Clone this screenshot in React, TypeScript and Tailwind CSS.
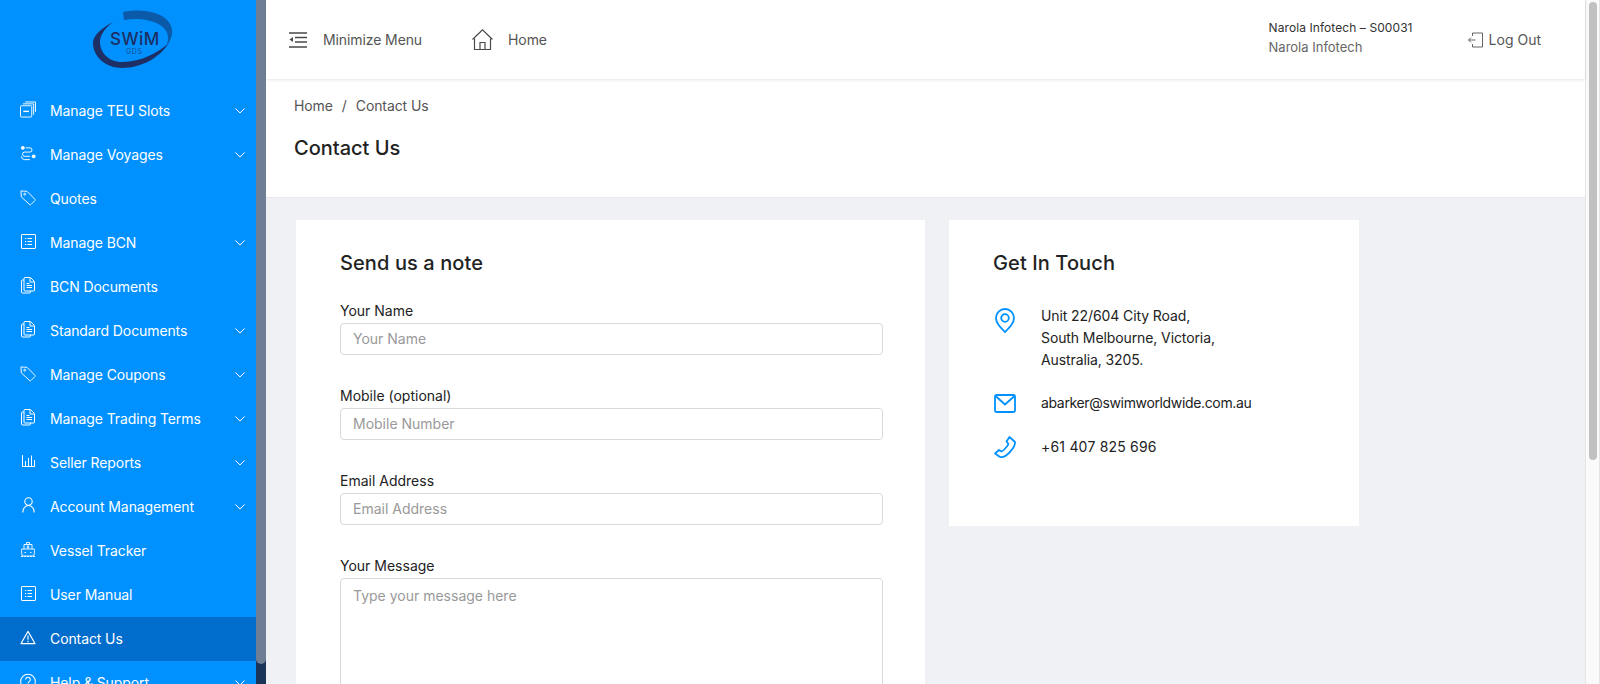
import React from "react";

const W = "#ffffff";

const Copy = () => (
  <svg width="17" height="17" viewBox="0 0 17 17" fill="none" stroke={W} strokeWidth="1">
    <rect x="0.5" y="4.5" width="12" height="12" rx="1" />
    <path d="M3 2.5h11.5V14M5.5 0.5h11V11" />
    <path d="M3.5 10.5h6" strokeWidth="1.5" />
  </svg>
);
const Route = () => (
  <svg width="17" height="17" viewBox="0 0 17 17" fill="none" stroke={W} strokeWidth="1">
    <circle cx="3" cy="2.5" r="2" fill={W} stroke="none" />
    <circle cx="14.5" cy="11.5" r="2" fill={W} stroke="none" />
    <path d="M6 2.500h4.500a2.200 2.200 0 0 1 0 4.500h-6a2.300 2.300 0 0 0 0 4.500h6" />
    <path d="M1.500 11.500a3.500 3.500 0 0 0 3 3.500h6" />
  </svg>
);
const Tag = () => (
  <svg width="17" height="17" viewBox="0 0 17 17" fill="none" stroke={W} strokeWidth="1" strokeLinejoin="round">
    <path d="M1 1.5l6.5 0.5 8.500 8.500a0.800 0.800 0 0 1 0 1.100l-4.500 4.500a0.800 0.800 0 0 1-1.100 0L1.500 8z" />
    <circle cx="5" cy="5" r="1" />
  </svg>
);
const ListBox = () => (
  <svg width="15" height="15" viewBox="0 0 15 15" fill="none" stroke={W} strokeWidth="1">
    <rect x="0.5" y="0.5" width="14" height="14" rx="0.5" />
    <path d="M6.500 4.500h4.500M6.500 7.500h4.500M6.500 10.500h4.500M4 4.500h1.200M4 7.500h1.200M4 10.500h1.200" />
  </svg>
);
const Doc = () => (
  <svg width="14" height="17" viewBox="0 0 14 17" fill="none" stroke={W} strokeWidth="1" strokeLinejoin="round">
    <path d="M3 3H1.500a1 1 0 0 0-1 1v11a1 1 0 0 0 1 1h7a1 1 0 0 0 1-1v-1" />
    <path d="M3 1.500a1 1 0 0 1 1-1h5.500l4 4V13a1 1 0 0 1-1 1H4a1 1 0 0 1-1-1z" />
    <path d="M9 1v4h4M5.500 6.500h3M5.500 8.500h5.500M5.500 10.500h5.500" />
  </svg>
);
const Bars = () => (
  <svg width="13" height="12" viewBox="0 0 13 12" fill="none" stroke={W} strokeWidth="1">
    <path d="M0.500 0v11.500M0 11.500h13M3.500 6v5M6.500 3v8M9.500 0.500v10.500M12.500 5v6" />
  </svg>
);
const User = () => (
  <svg width="13" height="16" viewBox="0 0 13 16" fill="none" stroke={W} strokeWidth="1.1">
    <circle cx="6.500" cy="4.500" r="3.700" />
    <path d="M0.800 15.500c0-4 2.500-7 5.700-7s5.700 3 5.700 7" />
  </svg>
);
const Ship = () => (
  <svg width="14" height="15" viewBox="0 0 14 15" fill="none" stroke={W} strokeWidth="0.9">
    <path d="M5.500 2.500V0.500h3v2M3 7V2.500h8V7M1.200 14c-0.500-3-1-5-0.500-7h12.600c0.500 2 0 4-0.500 7z" />
    <path d="M5.500 5h3M3.500 10.500h1.500M9 10.500h1.500M7 2.500V7" />
    <path d="M0 14.500h14" strokeDasharray="2 1" />
  </svg>
);
const Warn = () => (
  <svg width="17" height="15" viewBox="0 0 17 15" fill="none" stroke={W} strokeWidth="1.1" strokeLinejoin="round">
    <path d="M8.500 1L16 14H1z" />
    <path d="M8.500 5.500v4.500M8.500 11v1.500" strokeWidth="1.2" />
  </svg>
);
const Help = () => (
  <svg width="17" height="17" viewBox="0 0 17 17" fill="none" stroke={W} strokeWidth="1.1">
    <circle cx="8.500" cy="8.500" r="7.800" />
    <path d="M6 6.500a2.500 2.500 0 1 1 3.800 2.100c-0.800 0.500-1.300 1-1.300 2M8.500 12v1.500" />
  </svg>
);
const Chevron = () => (
  <svg width="10" height="6" viewBox="0 0 10 6" fill="none" stroke={W} strokeWidth="1">
    <path d="M0.500 0.500L5 5l4.500-4.500" />
  </svg>
);

const items: [React.ReactNode, string, boolean, boolean?][] = [
  [<Copy />, "Manage TEU Slots", true],
  [<Route />, "Manage Voyages", true],
  [<Tag />, "Quotes", false],
  [<ListBox />, "Manage BCN", true],
  [<Doc />, "BCN Documents", false],
  [<Doc />, "Standard Documents", true],
  [<Tag />, "Manage Coupons", true],
  [<Doc />, "Manage Trading Terms", true],
  [<Bars />, "Seller Reports", true],
  [<User />, "Account Management", true],
  [<Ship />, "Vessel Tracker", false],
  [<ListBox />, "User Manual", false],
  [<Warn />, "Contact Us", false, true],
  [<Help />, "Help & Support", true],
];

function Logo() {
  return (
    <div className="relative w-[84px] h-[60px]">
      <svg width="84" height="60" viewBox="0 0 84 60" className="absolute inset-0">
        <path d="M21 12C10 18 1 25 1 33C1 47 14 58 30 58C50 58 68 47 76 34C66 42 50 52 30 52C16 52 8 42 8 32C8 25 13 18 21 12z" fill="#1d2f64" />
        <path d="M31 2C45 -1 65 0 75 10C83 18 81 28 74 37C78 27 76 20 68 15C58 9 44 8 32 10z" fill="#0b59a9" />
      </svg>
      <span className="absolute left-[18px] top-[18px] text-[17px] leading-[22px] font-medium tracking-[0.5px] text-[#1d2f64]">SWiM</span>
      <span className="absolute left-[34px] top-[37px] text-[7px] leading-[9px] tracking-[0.6px] text-[#1d4f8f]">GDS</span>
    </div>
  );
}

function Sidebar() {
  return (
    <div className="flex w-[266px] shrink-0 h-full">
      <div className="w-[256px] bg-[#0091ff] overflow-hidden">
        <div className="h-[89px] pt-[10px] pl-[92px]">
          <Logo />
        </div>
        {items.map(([icon, label, chev, active], i) => (
          <div key={i} className={`flex items-center h-[44px] pl-[20px] pr-[11px] ${active ? "bg-[#006dcc]" : ""}`}>
            <span className="w-[16px] flex justify-center shrink-0 pb-[4px]">{icon}</span>
            <span className="ml-[14px] flex-1 text-[14px] leading-[20px] tracking-[-0.1px] pb-[1px] text-white whitespace-nowrap">{label}</span>
            {chev && <Chevron />}
          </div>
        ))}
      </div>
      <div className="w-[10px] flex flex-col bg-[#1a3358]">
        <div className="h-[664px] bg-[#6e7f94] rounded-b-[5px]" />
      </div>
    </div>
  );
}

function Header() {
  return (
    <div className="h-[79px] bg-white shadow-[0_1px_3px_rgba(0,0,0,0.1)] relative flex items-center pl-[23px] pr-[44px] text-[14px] text-[#555] tracking-[-0.1px]">
      <svg width="18" height="16" viewBox="0 0 18 16" fill="none" stroke="#4a4a4a" strokeWidth="1.4">
        <path d="M0 1h18M6 5.500h12M6 10h12M0 15h18" />
        <path d="M4 5v5L0.500 7.500z" fill="#4a4a4a" strokeWidth="0" />
      </svg>
      <span className="ml-[16px]">Minimize Menu</span>
      <svg className="ml-[50px]" width="21" height="22" viewBox="0 0 21 22" fill="none" stroke="#4a4a4a" strokeWidth="1.2">
        <path d="M0.500 10.500L10.500 0.800l10 9.700" />
        <path d="M2.500 9.500v11h16v-11M8 20.500v-7h5v7" />
      </svg>
      <span className="ml-[15px]">Home</span>
      <div className="flex-1" />
      <div className="flex flex-col pb-[5px] tracking-normal">
        <span className="text-[12px] leading-[20px] tracking-[0.08px] text-[#333]">Narola Infotech – S00031</span>
        <span className="text-[13px] leading-[19px] text-[#666]">Narola Infotech</span>
      </div>
      <svg className="ml-[55px]" width="15" height="16" viewBox="0 0 15 16" fill="none" stroke="#666" strokeWidth="1">
        <path d="M4.500 4V1h10v14h-10v-3M0.500 8h7M3 5.500L0.500 8 3 10.500" />
      </svg>
      <span className="ml-[6px] tracking-normal">Log Out</span>
    </div>
  );
}

function Field({ label, ph }: { label: string; ph: string }) {
  return (
    <div className="mb-[30px]">
      <div className="text-[14px] leading-[22px] text-[#222] h-[22px] mb-[1px]">{label}</div>
      <div className="h-[32px] border border-[#d9d9d9] rounded-[4px] px-[12px] pb-[1px] flex items-center text-[14px] text-[#999]">{ph}</div>
    </div>
  );
}

export default function App() {
  return (
    <div className="flex w-[1600px] h-[684px] overflow-hidden bg-white" style={{ fontFamily: "Inter, 'Noto Sans', sans-serif" }}>
      <Sidebar />
      <div className="flex-1 flex flex-col min-w-0">
        <Header />
        <div className="h-[119px] bg-white border-b border-[#e8e8ee] pl-[28px] pt-[16px]">
          <div className="text-[14px] leading-[22px] tracking-[-0.1px] text-[#555]">Home<span className="mx-[9px]">/</span>Contact Us</div>
          <div className="mt-[17px] text-[20px] leading-[28px] font-medium text-[#222]">Contact Us</div>
        </div>
        <div className="flex-1 bg-[#eff1f5] flex items-start gap-[24px] pl-[30px] pt-[22px] overflow-hidden">
          <div className="w-[629px] shrink-0 bg-white px-[44px] pt-[29px] h-[600px]">
            <div className="text-[20px] leading-[28px] font-medium tracking-[0.1px] text-[#222] mb-[23px]">Send us a note</div>
            <div className="w-[543px]">
              <Field label="Your Name" ph="Your Name" />
              <Field label="Mobile (optional)" ph="Mobile Number" />
              <Field label="Email Address" ph="Email Address" />
              <div className="text-[14px] leading-[22px] text-[#222] h-[22px] mb-[1px]">Your Message</div>
              <div className="h-[200px] border border-[#d9d9d9] rounded-[4px] px-[12px] py-[6px] text-[14px] leading-[22px] text-[#999]">Type your message here</div>
            </div>
          </div>
          <div className="w-[410px] h-[306px] shrink-0 bg-white pl-[44px] pt-[29px]">
            <div className="text-[20px] leading-[28px] font-medium tracking-[0.1px] text-[#222] mb-[29px]">Get In Touch</div>
            <div className="flex">
              <svg className="mt-[2px] ml-[2px]" width="20" height="25" viewBox="0 0 20 25" fill="none" stroke="#0091ff" strokeWidth="1.8">
                <path d="M10 24C5 19 1 15 1 10a9 9 0 0 1 18 0c0 5-4 9-9 14z" strokeLinejoin="round" />
                <circle cx="10" cy="10" r="3.800" />
              </svg>
              <div className="ml-[26px] -mt-[1px] mb-[1px] text-[14px] leading-[22px] tracking-[-0.1px] text-[#222]">
                Unit 22/604 City Road,<br />South Melbourne, Victoria,<br />Australia, 3205.
              </div>
            </div>
            <div className="flex items-center mt-[20px] h-[22px]">
              <svg className="ml-[1px]" width="22" height="19" viewBox="0 0 22 19" fill="none" stroke="#0091ff" strokeWidth="1.8">
                <rect x="1" y="1" width="20" height="17" rx="1.500" />
                <path d="M1.500 2L11 10.500 20.500 2" />
              </svg>
              <div className="ml-[25px] pb-[2px] text-[14px] tracking-[-0.35px] text-[#222]">abarker@swimworldwide.com.au</div>
            </div>
            <div className="flex items-center mt-[22px] h-[22px]">
              <svg className="ml-[1px]" width="22" height="22" viewBox="0 0 22 22" fill="none" stroke="#0091ff" strokeWidth="1.8" strokeLinejoin="round">
                <path d="M15.500 1L21 6c0.300 3-3 8-6 11s-7 4.500-9 4L1 17.500l4-3.500 2.500 1.500c1.500-0.500 6-5 7-7.500l-2-2.500z" />
              </svg>
              <div className="ml-[25px] pb-[2px] text-[14px] tracking-[0.2px] text-[#222]">+61 407 825 696</div>
            </div>
          </div>
        </div>
      </div>
      <div className="w-[15px] shrink-0 h-full bg-[#fafafa] border-x border-[#e5e5e5] px-[3px] pt-[2px]">
        <div className="h-[458px] w-[8px] rounded-[4px] bg-[#c1c1c1]" />
      </div>
    </div>
  );
}
